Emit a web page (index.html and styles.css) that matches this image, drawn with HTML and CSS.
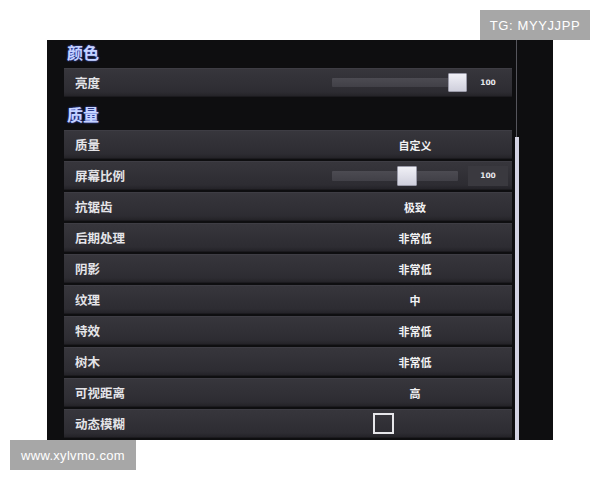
FILE: index.html
```html
<!DOCTYPE html>
<html lang="zh">
<head>
<meta charset="utf-8">
<link rel="stylesheet" href="styles.css">
</head>
<body>
<div class="page">
  <div class="badge badge-top">TG: MYYJJPP</div>
  <div class="panel">
    <div class="content">
      <div class="heading">颜色</div>
      <div class="row row-first">
        <div class="label">亮度</div>
        <div class="ctrl slider-ctrl">
          <div class="track track-bright"><div class="thumb thumb-bright"></div></div>
          <div class="num num-plain">100</div>
        </div>
      </div>
      <div class="heading heading-2">质量</div>
      <div class="row">
        <div class="label">质量</div>
        <div class="ctrl value">自定义</div>
      </div>
      <div class="row">
        <div class="label">屏幕比例</div>
        <div class="ctrl slider-ctrl">
          <div class="track track-ratio"><div class="thumb thumb-ratio"></div></div>
          <div class="num num-box">100</div>
        </div>
      </div>
      <div class="row">
        <div class="label">抗锯齿</div>
        <div class="ctrl value">极致</div>
      </div>
      <div class="row">
        <div class="label">后期处理</div>
        <div class="ctrl value">非常低</div>
      </div>
      <div class="row">
        <div class="label">阴影</div>
        <div class="ctrl value">非常低</div>
      </div>
      <div class="row">
        <div class="label">纹理</div>
        <div class="ctrl value">中</div>
      </div>
      <div class="row">
        <div class="label">特效</div>
        <div class="ctrl value">非常低</div>
      </div>
      <div class="row">
        <div class="label">树木</div>
        <div class="ctrl value">非常低</div>
      </div>
      <div class="row">
        <div class="label">可视距离</div>
        <div class="ctrl value">高</div>
      </div>
      <div class="row">
        <div class="label">动态模糊</div>
        <div class="ctrl check-ctrl"><div class="checkbox"></div></div>
      </div>
    </div>
    <div class="scroll">
      <div class="scroll-line"></div>
      <div class="scroll-thumb"></div>
    </div>
  </div>
  <div class="badge badge-bottom">www.xylvmo.com</div>
</div>
</body>
</html>
```

FILE: styles.css
```css
* { box-sizing: border-box; }
html, body { margin: 0; padding: 0; background: #ffffff; }
.page {
  position: relative;
  width: 600px;
  height: 480px;
  padding-top: 40px;
  font-family: "Noto Sans CJK SC", "Noto Sans", sans-serif;
}
.badge {
  background: #a7a7a7;
  color: #ffffff;
  font-family: "Liberation Sans", "DejaVu Sans", sans-serif;
  font-size: 13px;
  letter-spacing: 0.6px;
  display: flex;
  align-items: center;
  justify-content: center;
}
.badge-top {
  position: absolute;
  top: 10px;
  left: 480px;
  width: 110px;
  height: 30px;
}
.badge-bottom {
  margin-left: 10px;
  width: 126px;
  height: 30px;
  letter-spacing: 0.3px;
}
.panel {
  margin-left: 47px;
  width: 506px;
  height: 400px;
  background: #0e0e10;
  display: flex;
  overflow: hidden;
  padding-left: 17px;
}
.content {
  width: 448px;
  display: flex;
  flex-direction: column;
}
.heading {
  height: 28px;
  flex: none;
  padding-left: 3px;
  display: flex;
  align-items: center;
  font-size: 16px;
  font-weight: 700;
  color: #c6d3ff;
  text-shadow: 0 0 2px #4a66ff;
  padding-bottom: 4px;
}
.heading-2 {
  height: 33px;
  padding-bottom: 0;
}
.row {
  flex: none;
  height: 29px;
  margin-bottom: 2px;
  display: grid;
  grid-template-columns: 268px 1fr;
  align-items: center;
  background: linear-gradient(#37363c, #2d2c32 85%, #242328);
  border-top: 1px solid #3e3d44;
  border-bottom: 1px solid #1b1a1e;
}
.row-first { margin-bottom: 0; }
.label {
  padding-left: 11px;
  font-size: 12.5px;
  font-weight: 700;
  color: #e4e4e8;
}
.value {
  text-align: center;
  padding-right: 14px;
  font-size: 11px;
  font-weight: 700;
  color: #f2f2f4;
}
.slider-ctrl {
  display: flex;
  align-items: center;
  height: 100%;
}
.track {
  position: relative;
  height: 10px;
  background: linear-gradient(#4c4b52, #414047);
  border-radius: 1px;
}
.track-bright { width: 135px; height: 9px; }
.track-ratio { width: 126px; }
.thumb {
  position: absolute;
  top: -5px;
  width: 20px;
  height: 20px;
  background: linear-gradient(#f0f0f6, #cfcfdc);
  border: 1px solid #9a9aa8;
  border-radius: 1px;
}
.thumb-bright { left: 116px; width: 19px; top: -5px; height: 19px; }
.thumb-ratio { left: 65px; }
.num {
  font-family: "DejaVu Sans", sans-serif;
  font-size: 7.5px;
  font-weight: 700;
  color: #e8e8ec;
  display: flex;
  align-items: center;
  justify-content: center;
}
.num-plain {
  width: 40px;
  margin-left: 1px;
  height: 20px;
}
.num-box {
  width: 40px;
  height: 20px;
  margin-left: 10px;
  background: #3a393f;
}
.check-ctrl {
  display: flex;
  align-items: center;
}
.checkbox {
  margin-left: 41px;
  width: 21px;
  height: 21px;
  border: 2px solid #e6e6ea;
}
.scroll {
  margin-left: 3px;
  width: 4px;
  display: flex;
  flex-direction: column;
}
.scroll-line {
  height: 97px;
  flex: none;
  background: linear-gradient(90deg, transparent 1px, #55555c 1px, #55555c 2px, transparent 2px);
}
.scroll-thumb {
  flex: 1;
  background: #d2d2e2;
}
```
